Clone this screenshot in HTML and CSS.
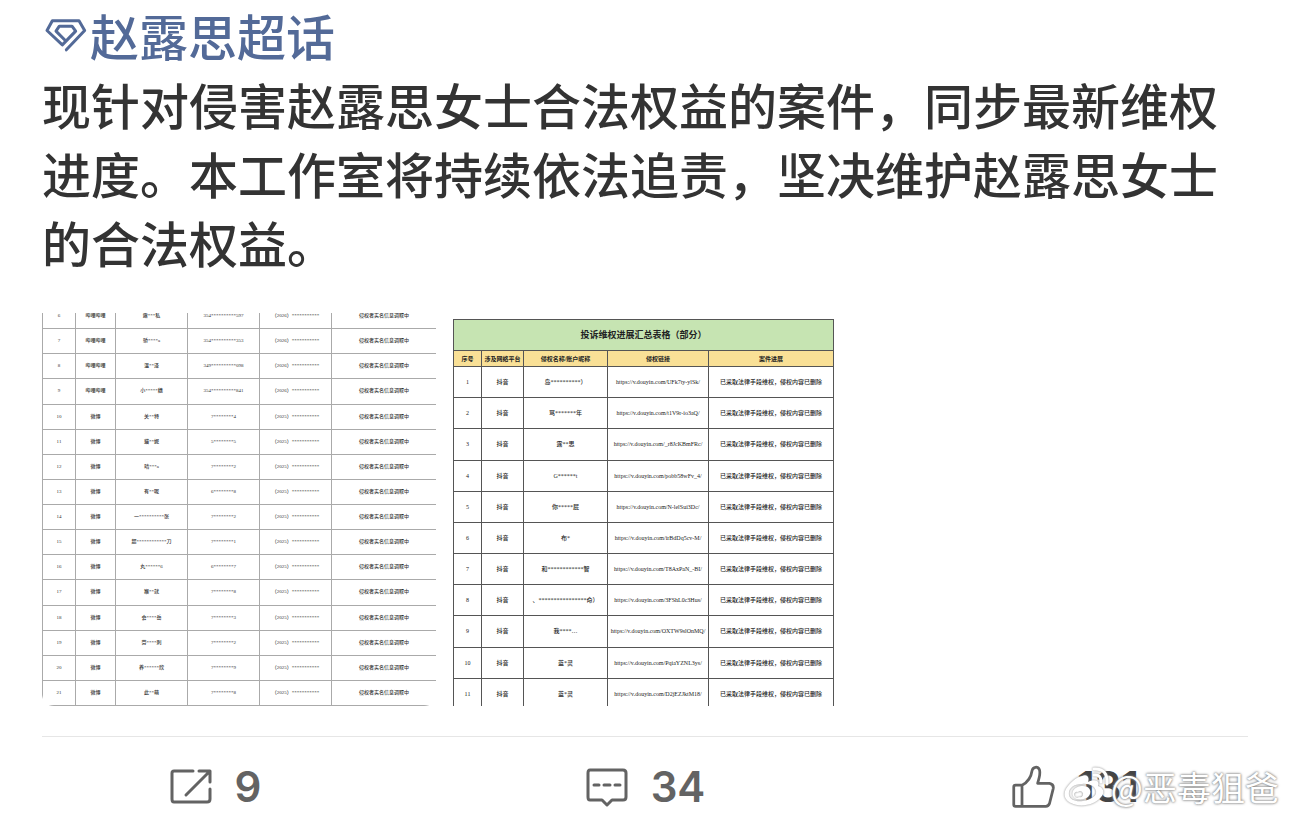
FILE: index.html
```
<!DOCTYPE html>
<html lang="zh-CN">
<head>
    <meta charset="UTF-8">
    <meta name="viewport" content="width=device-width, initial-scale=1.0">
    <title>赵露思超话</title>
    <link rel="stylesheet" href="styles.css">
</head>
<body>

    <article class="post">
        <div class="post-text">
            <a class="topic" href="#topic">
                <svg class="topic-icon" viewBox="0 0 126 104" aria-hidden="true">
                    <path d="M64 98 L119 40 L102 11 H22 L6 40 L52 83 L92 42 L81 27 H43 L33 42 L61 70"/>
                </svg>赵露思超话</a>
            <p>现针对侵害赵露思女士合法权益的案件，同步最新维权进度。本工作室将持续依法追责，坚决维护赵露思女士的合法权益。</p>
        </div>

        <div class="gallery">
            <!-- Real-name lookups -->
            <div class="thumb thumb-lookup">
                <table class="sheet lookup">
                    <colgroup>
                        <col class="w33"><col class="w40"><col class="w72"><col class="w72"><col class="w72"><col>
                    </colgroup>
                    <tbody id="lookup-rows"></tbody>
                </table>
            </div>

            <!-- Complaint summary -->
            <div class="thumb thumb-summary">
                <table class="sheet summary">
                    <colgroup>
                        <col class="w28"><col class="w42"><col class="w84"><col class="w101"><col>
                    </colgroup>
                    <thead>
                        <tr class="sheet-title"><th colspan="5">投诉维权进展汇总表格（部分）</th></tr>
                        <tr class="sheet-head">
                            <th>序号</th>
                            <th>涉及网络平台</th>
                            <th>侵权名称/账户昵称</th>
                            <th>侵权链接</th>
                            <th>案件进展</th>
                        </tr>
                    </thead>
                    <tbody id="summary-rows"></tbody>
                </table>
            </div>
        </div>
    </article>

    <div class="actions">
        <button type="button" aria-label="转发 9">
            <svg class="icon" viewBox="0 0 44 44" aria-hidden="true">
                <path d="M24 6 H5 Q3 6 3 8 V34 Q3 37 5 37 H38 Q41 37 41 34 V24 M30 6 H41 V17 M40 7 L17 30"/>
            </svg>
            <span>9</span>
        </button>
        <button type="button" aria-label="评论 34">
            <svg class="icon" viewBox="0 0 44 44" aria-hidden="true">
                <path d="M5 5 H38 Q41 5 41 8 V32 Q41 35 38 35 H27 L22 40 L17 35 H5 Q3 35 3 32 V8 Q3 5 5 5 Z M9 20 H14 M19 20 H25 M30 20 H35"/>
            </svg>
            <span>34</span>
        </button>
        <button type="button" class="like" aria-label="赞 131">
            <svg class="icon" viewBox="0 0 48 48" aria-hidden="true">
                <path d="M12 22 H5 Q3 22 3 24 V43 Q3 45 5 45 H38 Q41 45 42 42 L46 26 Q47 21 42 20 H29 C31 14 32 8 31 5 C29 1 24 2 23 6 C22 13 18 19 12 22 V45"/>
            </svg>
            <span>131</span>
        </button>
    </div>

    <div class="watermark">
        <svg viewBox="0 0 48 42" aria-hidden="true">
            <path class="wm-fill" fill-rule="evenodd" d="M19 10 C23 8 27 10 25 16 C31 13 37 14 35 20 C41 22 42 27 38 31 C32 39 17 42 8 37 C0 33 0 26 5 20 C9 15 14 11 19 10 Z M19 18 C10 18 5 23 6 29 C7 34 13 36 20 35 C28 34 34 30 33 25 C32 20 26 17 19 18 Z"/>
            <path class="wm-fill" fill-rule="evenodd" d="M18 20 C11 21 8 26 10 30 C13 35 21 34 25 31 C30 26 27 19 18 20 Z M15 26 A3 3 0 1 0 16 31 A3 3 0 1 0 15 26 Z"/>
            <path class="wm-line" d="M31 9 Q38 8 38 16 M31 3 Q45 2 44 18"/>
        </svg>
        <span>@恶毒狙爸</span>
    </div>

    <script src="script.js"></script>
</body>
</html>
```
FILE: styles.css
```
* {
    box-sizing: border-box;
}
body {
    margin: 0;
    background: #fff;
    color: #333;
    font-family: "Noto Sans CJK SC", sans-serif;
}
.post {
    margin: 0 42px;
    padding-bottom: 30px;
    border-bottom: 1px solid #e6e6e6;
}
.post-text {
    font-size: 49px;
    line-height: 69px;
    font-weight: 500;
}
.post-text p {
    margin: 0;
}
.topic {
    display: flex;
    align-items: center;
    gap: 3px;
    padding-left: 3px;
    color: #536a98;
    text-decoration: none;
}
.topic-icon {
    width: 42px;
    height: 35px;
    fill: none;
    stroke: currentColor;
    stroke-width: 9;
    stroke-linejoin: round;
    stroke-linecap: round;
}

/* Picture grid */
.gallery {
    display: grid;
    grid-template-columns: repeat(3, 1fr);
    gap: 12px;
    margin-top: 37px;
}
.thumb {
    display: flex;
    height: 393px;
    overflow: hidden;
}
.thumb-lookup {
    align-items: flex-end;
    border-radius: 0 0 12px 12px;
}
.thumb-summary {
    align-items: flex-start;
    padding: 6px 8px 0 5px;
}
.sheet {
    width: 100%;
    table-layout: fixed;
    border-collapse: collapse;
    font-family: "Liberation Serif", "Noto Sans CJK SC", serif;
    text-align: center;
    white-space: nowrap;
}
.sheet th,
.sheet td {
    padding: 0;
    line-height: 8px;
}
.lookup {
    height: 403px;
    color: #333;
    font-size: 5px;
    font-weight: 500;
}
.lookup td {
    border: 1px solid #aaa;
}
.lookup td:last-child {
    border-right: none;
}
.summary {
    height: 391px;
    color: #222;
    font-size: 6px;
    font-weight: 500;
}
.summary th,
.summary td {
    border: 1px solid #555;
}
.sheet-title {
    height: 31px;
    background: #c6e4b2;
    font-size: 9px;
}
.sheet-head {
    height: 16px;
    background: #f9e096;
}
.w28 { width: 28px; }
.w33 { width: 33px; }
.w40 { width: 40px; }
.w42 { width: 42px; }
.w72 { width: 72px; }
.w84 { width: 84px; }
.w101 { width: 101px; }

/* Action bar */
.actions {
    display: flex;
    padding-top: 21px;
}
.actions button {
    flex: 1;
    display: flex;
    justify-content: center;
    align-items: center;
    gap: 22px;
    padding: 0;
    border: none;
    background: none;
    color: #636363;
    font-family: Inter, sans-serif;
    font-size: 42px;
    font-weight: 600;
    line-height: 58px;
    cursor: pointer;
}
.icon {
    width: 44px;
    height: 44px;
    fill: none;
    stroke: currentColor;
    stroke-width: 3;
    stroke-linecap: round;
    stroke-linejoin: round;
}
.actions .like span {
    color: #444;
}

.watermark {
    position: absolute;
    right: 11px;
    top: 763px;
    display: flex;
    align-items: center;
    color: #fff;
    font-family: "Noto Sans CJK SC", sans-serif;
    font-size: 34px;
    line-height: 48px;
    text-shadow: 0 0 3px #777, 0 0 2px #999;
    pointer-events: none;
}
.watermark svg {
    width: 48px;
    height: 42px;
    filter: drop-shadow(0 0 1px #888);
}
.wm-fill {
    fill: #fff;
}
.wm-line {
    fill: none;
    stroke: #fff;
    stroke-width: 3;
    stroke-linecap: round;
}
```
FILE: script.js
```
var lookups = [
    ['哔哩哔哩', '露***私', '354**********597', '2026'],
    ['哔哩哔哩', '骄****a', '354**********353', '2026'],
    ['哔哩哔哩', '温**泽', '349**********098', '2026'],
    ['哔哩哔哩', '小*****穗', '354**********841', '2026'],
    ['微博', '关**特', '7********4', '2025'],
    ['微博', '貓**妮', '5********5', '2025'],
    ['微博', '晴***a', '7********2', '2025'],
    ['微博', '有**呢', '6********8', '2025'],
    ['微博', '一**********张', '7********2', '2025'],
    ['微博', '超************刀', '7********1', '2025'],
    ['微博', '丸******6', '6********7', '2025'],
    ['微博', '猴**就', '7********8', '2025'],
    ['微博', '会****岳', '7********3', '2025'],
    ['微博', '劳****刺', '7********2', '2025'],
    ['微博', '养******欣', '7********9', '2025'],
    ['微博', '此**萌', '7********8', '2025']
];

var complaints = [
    ['岛**********）', 'UFk7ty-ylSk'],
    ['骂*******年', 't1V9r-io3aQ'],
    ['露**思', '_r8JcKBmFRc'],
    ['G******t', 'pobb58wFv_4'],
    ['你*****屁', 'N-lelSui3Dc'],
    ['布*', 'irBdDq5cv-M'],
    ['和************智', 'T8AxPaN_-BI'],
    ['、****************命）', '3FShL0c3Hus'],
    ['我****…', 'OXTW9slOnMQ'],
    ['蓝*灵', 'PqiaYZNL3ys'],
    ['蓝*灵', 'D2jEZJktM18']
];

function addRow(body, cells) {
    var row = body.insertRow();
    cells.forEach(function (text) {
        row.insertCell().textContent = text;
    });
}

var lookupBody = document.getElementById('lookup-rows');
lookups.forEach(function (r, i) {
    addRow(lookupBody, [i + 6, r[0], r[1], r[2], '（' + r[3] + '）***********', '侵权者实名信息调取中']);
});

var summaryBody = document.getElementById('summary-rows');
complaints.forEach(function (r, i) {
    addRow(summaryBody, [i + 1, '抖音', r[0], 'https://v.douyin.com/' + r[1] + '/', '已采取法律手段维权，侵权内容已删除']);
});
```
